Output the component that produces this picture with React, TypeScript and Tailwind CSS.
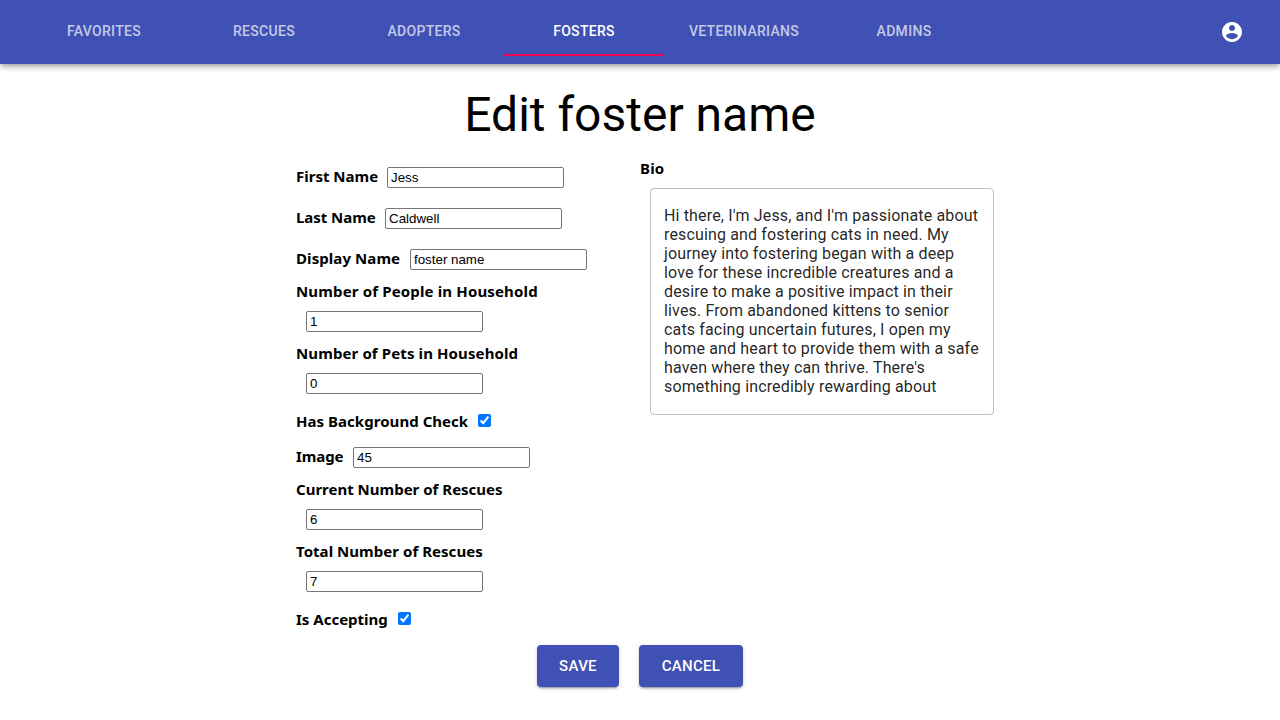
import type { ReactNode } from "react";

const tabs = ["Favorites", "Rescues", "Adopters", "Fosters", "Veterinarians", "Admins"];

const bio =
  "Hi there, I'm Jess, and I'm passionate about rescuing and fostering cats in need. My journey into fostering began with a deep love for these incredible creatures and a desire to make a positive impact in their lives. From abandoned kittens to senior cats facing uncertain futures, I open my home and heart to provide them with a safe haven where they can thrive. There's something incredibly rewarding about";

function Label({ children, className = "" }: { children: ReactNode; className?: string }) {
  return (
    <span
      className={`block h-[21px] shrink-0 whitespace-nowrap font-['Noto_Sans',sans-serif] text-[15px] leading-[22px] font-bold text-black ${className}`}
    >
      {children}
    </span>
  );
}

function TextInput({ value }: { value: string }) {
  return (
    <input
      defaultValue={value}
      className="m-[10px] h-[21px] w-[177px] rounded-[2px] border border-[#767676] bg-white px-[3px] py-px font-['Liberation_Sans',sans-serif] text-[13.333px] leading-[15px] text-black"
    />
  );
}

function InlineField({ label, value, className }: { label: string; value: string; className: string }) {
  return (
    <label className="flex h-[41px] items-start">
      <Label className={`mt-2 ${className}`}>{label}</Label>
      <TextInput value={value} />
    </label>
  );
}

function StackedField({ label, value, className }: { label: string; value: string; className: string }) {
  return (
    <label className="block h-[62px]">
      <Label className={className}>{label}</Label>
      <span className="flex">
        <TextInput value={value} />
      </span>
    </label>
  );
}

function CheckField({ label, className }: { label: string; className: string }) {
  return (
    <label className="flex h-[33px] items-center">
      <Label className={className}>{label}</Label>
      <input type="checkbox" defaultChecked className="m-[10px] size-[13px]" />
    </label>
  );
}

function Button({ children, width }: { children: ReactNode; width: string }) {
  return (
    <button
      className={`h-[42px] rounded-[4px] bg-[#3f51b5] text-[15px] font-medium tracking-[0.02em] text-white uppercase shadow-[0_3px_1px_-2px_rgba(0,0,0,0.2),0_2px_2px_0_rgba(0,0,0,0.14),0_1px_5px_0_rgba(0,0,0,0.12)] ${width}`}
    >
      {children}
    </button>
  );
}

export default function App() {
  return (
    <div className="h-[720px] w-[1280px] overflow-hidden bg-white font-[Roboto,sans-serif]">
      <header className="flex h-16 items-center justify-between bg-[#3f51b5] px-6 shadow-[0_2px_4px_-1px_rgba(0,0,0,0.2),0_4px_5px_0_rgba(0,0,0,0.14),0_1px_10px_0_rgba(0,0,0,0.12)]">
        <nav className="flex">
          {tabs.map((tab) => (
            <button
              key={tab}
              className={`h-12 w-40 border-b-2 text-sm font-medium tracking-[0.022em] uppercase ${
                tab === "Fosters" ? "border-[#f50057] text-white" : "border-transparent text-white/70"
              }`}
            >
              {tab}
            </button>
          ))}
        </nav>
        <button className="mr-3 size-6 text-white">
          <svg viewBox="0 0 24 24" className="size-6" fill="currentColor">
            <path d="M12 2C6.48 2 2 6.48 2 12s4.48 10 10 10 10-4.48 10-10S17.52 2 12 2zm0 3c1.66 0 3 1.34 3 3s-1.34 3-3 3-3-1.34-3-3 1.34-3 3-3zm0 14.2c-2.5 0-4.71-1.28-6-3.22.03-1.99 4-3.08 6-3.08 1.99 0 5.97 1.09 6 3.08-1.29 1.94-3.5 3.22-6 3.22z" />
          </svg>
        </button>
      </header>
      <h1 className="mt-[23px] text-center text-5xl leading-[56px] font-normal text-black">Edit foster name</h1>
      <form className="mt-[14px]">
        <div className="flex pl-[296px]">
          <div className="w-[344px]">
            <InlineField label="First Name" value="Jess" className="w-[81px]" />
            <InlineField label="Last Name" value="Caldwell" className="w-[79px] tracking-[-0.05px]" />
            <InlineField label="Display Name" value="foster name" className="w-[104px] tracking-[0.08px]" />
            <StackedField label="Number of People in Household" value="1" className="tracking-[0.15px]" />
            <StackedField label="Number of Pets in Household" value="0" className="tracking-[0.11px]" />
            <CheckField label="Has Background Check" className="w-[172px] tracking-[0.04px]" />
            <InlineField label="Image" value="45" className="w-[47px] tracking-[-0.1px]" />
            <StackedField label="Current Number of Rescues" value="6" className="tracking-normal" />
            <StackedField label="Total Number of Rescues" value="7" className="tracking-[0.04px]" />
            <CheckField label="Is Accepting" className="w-[92px]" />
          </div>
          <div>
            <Label className="tracking-[0.2px]">Bio</Label>
            <textarea
              defaultValue={bio}
              className="mt-[10px] ml-[10px] block h-[227px] w-[344px] resize-none overflow-hidden rounded-[4px] border border-black/25 px-[13px] pt-[16.5px] pb-[18.5px] text-base leading-[19px] tracking-[0.00938em] text-black/87"
            />
          </div>
        </div>
        <div className="mt-[10px] flex justify-center gap-5">
          <Button width="w-[82px]">Save</Button>
          <Button width="w-[104px]">Cancel</Button>
        </div>
      </form>
    </div>
  );
}
